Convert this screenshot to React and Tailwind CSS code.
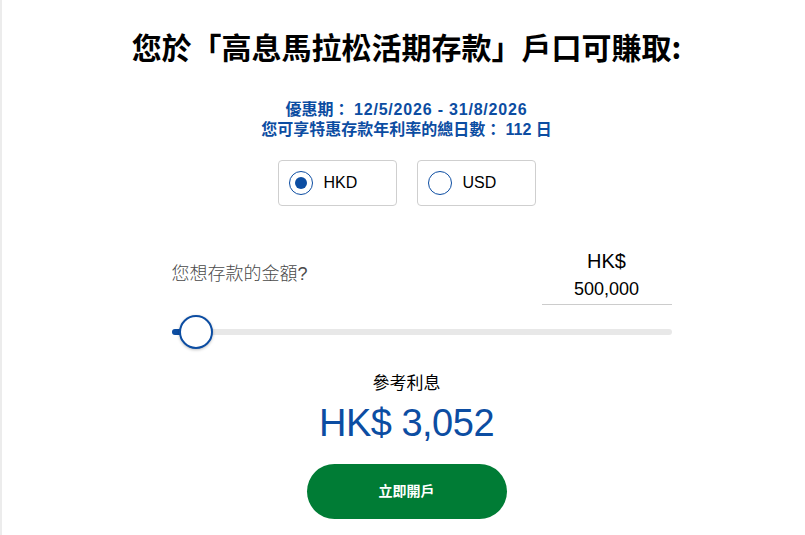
export default function App() {
  const font = { fontFamily: '"Liberation Sans", "Noto Sans CJK TC", sans-serif' };
  return (
    <div className="flex w-[805px] h-[535px] bg-white overflow-hidden" style={font}>
      <div className="w-[2px] h-full bg-[#ececec] shrink-0" />
      <div className="flex-1 flex flex-col items-center pl-[6px]">
        <h1 className="pt-[28px] text-[30px] leading-[36px] font-bold text-black" style={{ fontFamily: '"Noto Sans CJK TC", sans-serif' }}>
          您於「高息馬拉松活期存款」戶口可賺取:
        </h1>
        <div className="mt-[36px] flex flex-col items-center text-[16px] leading-[20px] font-bold text-[#0c4da2]">
          <p>優惠期： <span className="tracking-[0.8px]">12/5/2026 - 31/8/2026</span></p>
          <p>您可享特惠存款年利率的總日數： 112 日</p>
        </div>
        <div className="mt-[20px] flex gap-[20px]">
          <div className="w-[119px] h-[46px] rounded-[4px] border border-[#cfcfcf] flex items-center pl-[10px] gap-[11px]">
            <span className="w-[24px] h-[24px] rounded-full border border-[#0c4da2] flex items-center justify-center">
              <span className="w-[12px] h-[12px] rounded-full bg-[#0c4da2]" />
            </span>
            <span className="text-[16px] text-black">HKD</span>
          </div>
          <div className="w-[119px] h-[46px] rounded-[4px] border border-[#cfcfcf] flex items-center pl-[10px] gap-[11px]">
            <span className="w-[24px] h-[24px] rounded-full border border-[#0c4da2]" />
            <span className="text-[16px] text-black">USD</span>
          </div>
        </div>
        <div className="w-[532px] pl-[32px] mt-[43px] -translate-x-[1px]">
          <div className="flex items-center justify-between">
            <span className="text-[18px] text-[#4a4a4a] font-light mb-[5px]">您想存款的金額?</span>
            <div className="w-[130px] flex flex-col items-center border-b border-[#cccccc] pb-[3px]">
              <span className="text-[20px] leading-[24px] text-black">HK$</span>
              <span className="mt-[4px] text-[18px] leading-[24px] text-black">500,000</span>
            </div>
          </div>
          <div className="relative mt-[10px] h-[34px] flex items-center">
            <div className="w-full h-[6px] rounded-full bg-[#e8e8e8]">
              <div className="w-[14px] h-full rounded-full bg-[#0c4da2]" />
            </div>
            <div className="absolute left-[7px] top-0 w-[34px] h-[34px] rounded-full bg-white border-2 border-[#0c4da2] shadow-[0_1px_3px_rgba(0,0,0,0.25)]" />
          </div>
        </div>
        <p className="mt-[23px] text-[17px] leading-[24px] text-black">參考利息</p>
        <p className="mt-[5px] text-[38px] leading-[44px] text-[#0c4da2] tracking-[-0.5px]">HK$ 3,052</p>
        <button className="mt-[19px] w-[200px] h-[55px] rounded-full bg-[#007c35] text-white text-[14px] font-bold">
          立即開戶
        </button>
      </div>
    </div>
  );
}
